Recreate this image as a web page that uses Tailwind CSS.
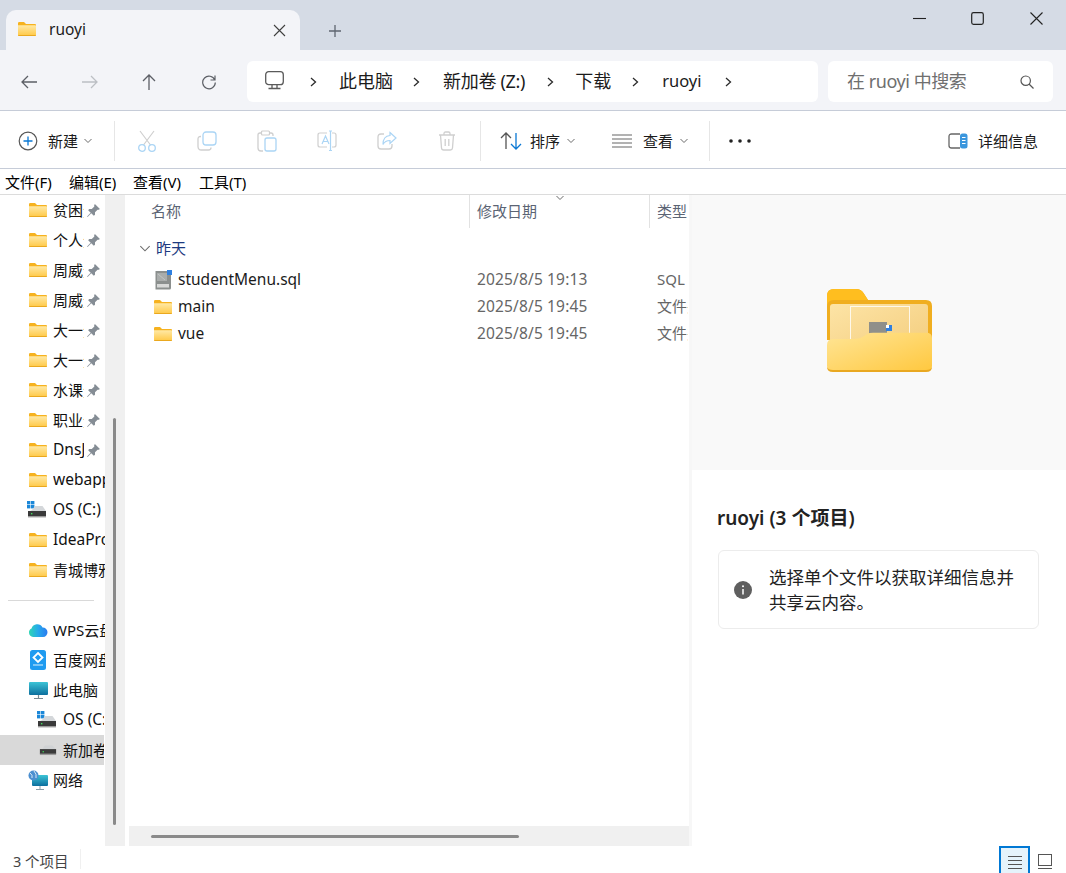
<!DOCTYPE html>
<html lang="zh">
<head>
<meta charset="utf-8">
<script src="https://cdn.jsdelivr.net/npm/@tailwindcss/browser@4"></script>
</head>
<body class="bg-white">
<svg width="0" height="0" class="absolute">
  <defs>
    <linearGradient id="fb" x1="0" y1="0" x2="0" y2="1"><stop offset="0" stop-color="#ffe9a6"/><stop offset="1" stop-color="#ffc845"/></linearGradient>
    <linearGradient id="fp" x1="0" y1="0" x2="1" y2="1"><stop offset="0" stop-color="#fde4a6"/><stop offset="1" stop-color="#f3cc7c"/></linearGradient>
    <linearGradient id="ff" x1="0" y1="0" x2="1" y2="1"><stop offset="0" stop-color="#ffe596"/><stop offset="1" stop-color="#ffc83f"/></linearGradient>
    <linearGradient id="wps" x1="0" y1="0" x2="1" y2="0"><stop offset="0" stop-color="#2fd6b4"/><stop offset=".5" stop-color="#26a9ec"/><stop offset="1" stop-color="#2a7bef"/></linearGradient>
    <linearGradient id="mon" x1="0" y1="0" x2="0" y2="1"><stop offset="0" stop-color="#3cc4d6"/><stop offset="1" stop-color="#0d6f9e"/></linearGradient>
    <symbol id="folder" viewBox="0 0 18 14">
      <path d="M0 1.2Q0 0 1.2 0H6L8 2H17Q18 2 18 3V8H0Z" fill="#f6b21f"/>
      <path d="M0 3.2H17.2Q18 3.2 18 4V13Q18 14 17 14H1Q0 14 0 13Z" fill="url(#fb)"/>
      <path d="M0 13H18Q18 14 17 14H1Q0 14 0 13Z" fill="#eaa81f"/>
    </symbol>
    <symbol id="pin" viewBox="0 0 14 14">
      <path d="M8.3 1L13 5.7 11.9 6.4 10.8 6.2 8.4 8.6 8.4 11 7.3 12 4.9 9.6 1.5 13 1 12.5 4.4 9.1 2 6.7 3 5.6 5.4 5.6 7.8 3.2 7.6 2.1Z" fill="#858d95"/>
    </symbol>
    <symbol id="drive" viewBox="0 0 20 18">
      <rect x="0" y="0" width="3.4" height="3.4" fill="#1b87d8"/><rect x="4" y="0" width="3.4" height="3.4" fill="#1b87d8"/>
      <rect x="0" y="4" width="3.4" height="3.4" fill="#1b87d8"/><rect x="4" y="4" width="3.4" height="3.4" fill="#1b87d8"/>
      <path d="M5 9L8 5H15.5L19 10V11H1Z" fill="#d4d7da"/>
      <rect x="1" y="10" width="18" height="6" fill="#3a3a3a"/><rect x="1" y="15" width="18" height="1.4" fill="#9a9a9a"/>
      <rect x="4" y="12" width="1.4" height="1.4" fill="#3fdc5a"/>
    </symbol>
    <symbol id="drive2" viewBox="0 0 20 12">
      <path d="M4 4.5L6.500 1H15L18.500 5V6H1.500Z" fill="#d0d2d4"/>
      <rect x="1" y="5" width="18" height="5.500" fill="#3a3a3a"/><rect x="1" y="10" width="18" height="1.600" fill="#999"/>
      <rect x="4" y="7.200" width="1.400" height="1.400" fill="#3fdc5a"/>
    </symbol>
    <symbol id="chev" viewBox="0 0 10 12"><path d="M3 2L7.500 6 3 10" fill="none" stroke="#2b2b2b" stroke-width="1.300"/></symbol>
    <symbol id="down" viewBox="0 0 10 6"><path d="M1.500 1L5 4.500 8.500 1" fill="none" stroke="#6b6b6b" stroke-width="1"/></symbol>
  </defs>
</svg>

<div class="w-[1066px] h-[873px] overflow-hidden flex flex-col bg-white text-[#1b1b1b] font-['Noto_Sans','Noto_Sans_CJK_SC',sans-serif]">

  <!-- title bar -->
  <div class="h-[50px] shrink-0 bg-[#d5dbe5] flex items-end pl-[6px] relative">
    <div class="w-[294px] h-[40px] bg-[#f3f4f8] rounded-t-[10px] flex items-center pl-[12px] pr-[14px]">
      <svg width="18" height="14" class="mb-[2px]"><use href="#folder"/></svg>
      <span class="ml-[13px] text-[15.500px] leading-none flex-1">ruoyi</span>
      <svg width="13" height="13" viewBox="0 0 13 13"><path d="M1 1L12 12M12 1L1 12" stroke="#3f3f3f" stroke-width="1.100"/></svg>
    </div>
    <svg width="14" height="14" viewBox="0 0 14 14" class="ml-[28px] mb-[12px]"><path d="M7 1V13M1 7H13" stroke="#5f6670" stroke-width="1.300"/></svg>
    <div class="flex-1"></div>
    <div class="self-start flex h-[37px] items-center">
      <div class="w-[58px] flex justify-center"><svg width="13" height="13" viewBox="0 0 13 13"><path d="M0 6.500H13" stroke="#222" stroke-width="1.100"/></svg></div>
      <div class="w-[58px] flex justify-center"><svg width="13" height="13" viewBox="0 0 13 13"><rect x=".7" y=".7" width="11.600" height="11.600" rx="1.800" fill="none" stroke="#222" stroke-width="1.200"/></svg></div>
      <div class="w-[60px] flex justify-center"><svg width="13" height="13" viewBox="0 0 13 13"><path d="M.5 .5L12.500 12.500M12.500 .5L.5 12.500" stroke="#222" stroke-width="1.100"/></svg></div>
    </div>
  </div>

  <!-- address row -->
  <div class="h-[61px] shrink-0 bg-[#f3f4f8] flex items-center border-b border-[#c6ccd8] pt-[3px]">
    <div class="w-[60px] flex justify-center pr-[2px]"><svg width="16" height="14" viewBox="0 0 16 14"><path d="M7 1L1 7L7 13M1 7H16" fill="none" stroke="#5c5f66" stroke-width="1.300"/></svg></div>
    <div class="w-[60px] flex justify-center"><svg width="16" height="14" viewBox="0 0 16 14"><path d="M9 1L15 7L9 13M0 7H15" fill="none" stroke="#bcbfc4" stroke-width="1.300"/></svg></div>
    <div class="w-[60px] flex justify-center pr-[2px]"><svg width="14" height="16" viewBox="0 0 14 16"><path d="M1 7L7 1L13 7M7 1V16" fill="none" stroke="#5c5f66" stroke-width="1.300"/></svg></div>
    <div class="w-[60px] flex justify-center pr-[2px]"><svg width="16" height="16" viewBox="0 0 16 16"><path d="M13.800 6A6.300 6.300 0 1 0 14.300 8.500M14 1.500V6H9.500" fill="none" stroke="#5c5f66" stroke-width="1.200"/></svg></div>
    <div class="ml-[7px] w-[571px] h-[41px] bg-white rounded-[6px] flex items-center text-[18px]">
      <svg width="19" height="19" viewBox="0 0 19 19" class="ml-[18px] mb-[3px]"><rect x=".7" y=".7" width="17.600" height="13" rx="3" fill="none" stroke="#5a5a5a" stroke-width="1.300"/><path d="M7 14V17M12 14V17M3.500 17.500H15.500" stroke="#5a5a5a" stroke-width="1.300"/></svg>
      <svg width="10" height="12" class="ml-[24px]"><use href="#chev"/></svg>
      <span class="ml-[21px]">此电脑</span>
      <svg width="10" height="12" class="ml-[18px]"><use href="#chev"/></svg>
      <span class="ml-[22px] tracking-[-0.3px]">新加卷 (Z:)</span>
      <svg width="10" height="12" class="ml-[20px]"><use href="#chev"/></svg>
      <span class="ml-[20px]">下载</span>
      <svg width="10" height="12" class="ml-[19px]"><use href="#chev"/></svg>
      <span class="ml-[22px] text-[16.500px]">ruoyi</span>
      <svg width="10" height="12" class="ml-[21px]"><use href="#chev"/></svg>
    </div>
    <div class="ml-[10px] w-[225px] h-[41px] bg-white rounded-[6px] flex items-center pl-[19px] text-[18px] text-[#6f6f6f]">
      <span class="flex-1 tracking-[-0.45px]">在 ruoyi 中搜索</span>
      <svg width="14" height="14" viewBox="0 0 14 14" class="mr-[19px]"><circle cx="5.700" cy="5.700" r="4.700" fill="none" stroke="#555" stroke-width="1.200"/><path d="M9 9L13.500 13.500" stroke="#555" stroke-width="1.200"/></svg>
    </div>
  </div>

  <!-- toolbar -->
  <div class="h-[58px] shrink-0 bg-white flex items-center border-b border-[#c6ccd8] text-[15px] pt-[3px]">
    <svg width="20" height="20" viewBox="0 0 20 20" class="ml-[18px]"><circle cx="10" cy="10" r="8.800" fill="none" stroke="#555" stroke-width="1.200"/><path d="M10 5.500V14.500M5.500 10H14.500" stroke="#0a78d4" stroke-width="1.300"/></svg>
    <span class="ml-[10px] leading-none">新建</span>
    <svg width="10" height="6" class="ml-[5px]"><use href="#down"/></svg>
    <div class="ml-[21px] w-px h-[40px] bg-[#e6e6e6]"></div>
    <div class="w-[2px]"></div>
    <!-- disabled actions -->
    <div class="w-[60px] flex justify-center"><svg width="20" height="22" viewBox="0 0 20 22"><path d="M3 1L13.500 15M17 1L6.500 15" stroke="#cfcfcf" stroke-width="1.200"/><circle cx="5" cy="18" r="3.300" fill="none" stroke="#abd5f5" stroke-width="1.300"/><circle cx="15" cy="18" r="3.300" fill="none" stroke="#abd5f5" stroke-width="1.300"/></svg></div>
    <div class="w-[60px] flex justify-center"><svg width="20" height="20" viewBox="0 0 20 20"><path d="M4 5.500H3.500Q1 5.500 1 8V15.500Q1 19 4.500 19H11.500Q14 19 14 16.500" fill="none" stroke="#cfcfcf" stroke-width="1.300"/><rect x="6" y="1" width="13" height="13" rx="3" fill="none" stroke="#abd5f5" stroke-width="1.300"/></svg></div>
    <div class="w-[60px] flex justify-center"><svg width="20" height="22" viewBox="0 0 20 22"><path d="M4 3H3Q1 3 1 5V18Q1 21 4 21H6" fill="none" stroke="#cfcfcf" stroke-width="1.300"/><path d="M12 3H14Q16 3 16 5V6" fill="none" stroke="#cfcfcf" stroke-width="1.300"/><rect x="4.500" y="1" width="8" height="4" rx="1" fill="none" stroke="#cfcfcf" stroke-width="1.200"/><rect x="8" y="8" width="11" height="13" rx="2" fill="none" stroke="#abd5f5" stroke-width="1.300"/></svg></div>
    <div class="w-[60px] flex justify-center"><svg width="20" height="22" viewBox="0 0 20 22"><path d="M10 3H3Q1 3 1 5V15Q1 17 3 17H10" fill="none" stroke="#cfcfcf" stroke-width="1.200"/><path d="M15 3H17Q19 3 19 5V15Q19 17 17 17H15" fill="none" stroke="#cfcfcf" stroke-width="1.200"/><path d="M5 14L8.500 6 12 14M6.200 11.500H10.800" fill="none" stroke="#abd5f5" stroke-width="1.200"/><path d="M12 1H15M13.500 1V20M12 20.500H15" fill="none" stroke="#abd5f5" stroke-width="1.200"/></svg></div>
    <div class="w-[60px] flex justify-center"><svg width="20" height="20" viewBox="0 0 20 20"><path d="M7 3H4Q1 3 1 6V15Q1 18 4 18H12Q15 18 15 15V13" fill="none" stroke="#cfcfcf" stroke-width="1.300"/><path d="M13 1.500L19 7 13 12.500V9.500Q8 9.500 6 13.500 6 5 13 4.500Z" fill="none" stroke="#abd5f5" stroke-width="1.200"/></svg></div>
    <div class="w-[60px] flex justify-center"><svg width="18" height="20" viewBox="0 0 18 20"><path d="M1 4H17M6 4V2.500Q6 1 7.500 1H10.500Q12 1 12 2.500V4M2.500 4L3.500 17Q3.700 19 5.700 19H12.300Q14.300 19 14.500 17L15.500 4M7.200 8V15M10.800 8V15" fill="none" stroke="#cfcfcf" stroke-width="1.300"/></svg></div>
    <div class="ml-[3px] w-px h-[40px] bg-[#e6e6e6]"></div>
    <svg width="22" height="18" viewBox="0 0 22 18" class="ml-[19px]"><path d="M1 6L6 1 11 6M6 1V17" fill="none" stroke="#555" stroke-width="1.300"/><path d="M11 12L16 17 21 12M16 1V17" fill="none" stroke="#0a78d4" stroke-width="1.300"/></svg>
    <span class="ml-[8px] leading-none">排序</span>
    <svg width="10" height="6" class="ml-[6px]"><use href="#down"/></svg>
    <svg width="20" height="14" viewBox="0 0 20 14" class="ml-[36px]"><path d="M0 1H20M0 5H20M0 9H20M0 13H20" stroke="#666" stroke-width="1.100"/></svg>
    <span class="ml-[11px] leading-none">查看</span>
    <svg width="10" height="6" class="ml-[6px]"><use href="#down"/></svg>
    <div class="ml-[20px] w-px h-[40px] bg-[#e6e6e6]"></div>
    <svg width="22" height="4" viewBox="0 0 22 4" class="ml-[19px]"><circle cx="2" cy="2" r="1.800" fill="#222"/><circle cx="11" cy="2" r="1.800" fill="#222"/><circle cx="20" cy="2" r="1.800" fill="#222"/></svg>
    <div class="flex-1"></div>
    <svg width="20" height="16" viewBox="0 0 20 16"><path d="M12 1H3.500Q1 1 1 3.500V12.500Q1 15 3.500 15H12" fill="none" stroke="#666" stroke-width="1.300"/><rect x="12" y=".5" width="7.500" height="15" rx="2.500" fill="#3a96dd"/><path d="M14 4.500H17.500M14 7.500H17.500M14 10.500H17.500" stroke="#fff" stroke-width="1.200"/></svg>
    <span class="ml-[10px] mr-[28px] leading-none">详细信息</span>
  </div>

  <!-- menu bar -->
  <div class="h-[26px] shrink-0 bg-white flex items-center border-b border-[#dcdcdc] text-[15px] text-black pt-[1px]">
    <span class="ml-[5px] w-[64px]">文件(F)</span>
    <span class="w-[64px]">编辑(E)</span>
    <span class="w-[66px]">查看(V)</span>
    <span>工具(T)</span>
  </div>

  <!-- body -->
  <div class="flex-1 min-h-0 flex">
    <!-- nav pane -->
    <div class="w-[105px] shrink-0 overflow-hidden text-[15px] leading-none text-[#111] whitespace-nowrap">
      <div class="h-[30px] flex items-center pl-[29px]"><svg width="18" height="14" class="shrink-0"><use href="#folder"/></svg><span class="ml-[6px] w-[31px] overflow-hidden">贫困资料</span><svg width="15" height="15" class="ml-[2px] shrink-0"><use href="#pin"/></svg></div>
      <div class="h-[30px] flex items-center pl-[29px]"><svg width="18" height="14" class="shrink-0"><use href="#folder"/></svg><span class="ml-[6px] w-[31px] overflow-hidden">个人资料</span><svg width="15" height="15" class="ml-[2px] shrink-0"><use href="#pin"/></svg></div>
      <div class="h-[30px] flex items-center pl-[29px]"><svg width="18" height="14" class="shrink-0"><use href="#folder"/></svg><span class="ml-[6px] w-[31px] overflow-hidden">周威资料</span><svg width="15" height="15" class="ml-[2px] shrink-0"><use href="#pin"/></svg></div>
      <div class="h-[30px] flex items-center pl-[29px]"><svg width="18" height="14" class="shrink-0"><use href="#folder"/></svg><span class="ml-[6px] w-[31px] overflow-hidden">周威资料</span><svg width="15" height="15" class="ml-[2px] shrink-0"><use href="#pin"/></svg></div>
      <div class="h-[30px] flex items-center pl-[29px]"><svg width="18" height="14" class="shrink-0"><use href="#folder"/></svg><span class="ml-[6px] w-[31px] overflow-hidden">大一资料</span><svg width="15" height="15" class="ml-[2px] shrink-0"><use href="#pin"/></svg></div>
      <div class="h-[30px] flex items-center pl-[29px]"><svg width="18" height="14" class="shrink-0"><use href="#folder"/></svg><span class="ml-[6px] w-[31px] overflow-hidden">大一资料</span><svg width="15" height="15" class="ml-[2px] shrink-0"><use href="#pin"/></svg></div>
      <div class="h-[30px] flex items-center pl-[29px]"><svg width="18" height="14" class="shrink-0"><use href="#folder"/></svg><span class="ml-[6px] w-[31px] overflow-hidden">水课资料</span><svg width="15" height="15" class="ml-[2px] shrink-0"><use href="#pin"/></svg></div>
      <div class="h-[30px] flex items-center pl-[29px]"><svg width="18" height="14" class="shrink-0"><use href="#folder"/></svg><span class="ml-[6px] w-[31px] overflow-hidden">职业资料</span><svg width="15" height="15" class="ml-[2px] shrink-0"><use href="#pin"/></svg></div>
      <div class="h-[30px] flex items-center pl-[29px]"><svg width="18" height="14" class="shrink-0"><use href="#folder"/></svg><span class="ml-[6px] w-[31px] overflow-hidden text-[15.500px]">DnsJava</span><svg width="15" height="15" class="ml-[2px] shrink-0"><use href="#pin"/></svg></div>
      <div class="h-[30px] flex items-center pl-[29px]"><svg width="18" height="14" class="shrink-0"><use href="#folder"/></svg><span class="ml-[6px] w-[52px] overflow-hidden text-[15.500px]">webapps</span></div>
      <div class="h-[30px] flex items-center pl-[27px]"><svg width="20" height="18" class="shrink-0"><use href="#drive"/></svg><span class="ml-[6px] w-[52px] overflow-hidden text-[15.500px]">OS (C:)</span></div>
      <div class="h-[30px] flex items-center pl-[29px]"><svg width="18" height="14" class="shrink-0"><use href="#folder"/></svg><span class="ml-[6px] w-[52px] overflow-hidden text-[15.500px]">IdeaProjects</span></div>
      <div class="h-[30px] flex items-center pl-[29px]"><svg width="18" height="14" class="shrink-0"><use href="#folder"/></svg><span class="ml-[6px] w-[52px] overflow-hidden">青城博雅教育</span></div>

      <div class="mt-[15px] mb-[14px] ml-[8px] w-[86px] h-px bg-[#d9d9d9]"></div>

      <div class="h-[30px] flex items-center pl-[28px]"><svg width="20" height="14" viewBox="0 0 20 14" class="shrink-0"><path d="M5 14A4.500 4.500 0 0 1 3.500 5.500 6 6 0 0 1 14.500 4.500 4.700 4.700 0 0 1 15 14Z" fill="url(#wps)"/></svg><span class="ml-[5px] w-[52px] overflow-hidden">WPS云盘</span></div>
      <div class="h-[30px] flex items-center pl-[30px]"><svg width="16" height="20" viewBox="0 0 16 20" class="shrink-0"><rect width="16" height="20" rx="2.500" fill="#1f9bf0"/><path d="M8 3L12.500 7.500 8 12 3.500 7.500Z" fill="none" stroke="#fff" stroke-width="1.800"/><path d="M3 15H13" stroke="#bfe3fb" stroke-width="1.200"/></svg><span class="ml-[7px] w-[52px] overflow-hidden">百度网盘</span></div>
      <div class="h-[30px] flex items-center pl-[29px]"><svg width="19" height="17" viewBox="0 0 19 17" class="shrink-0"><rect width="19" height="13" rx="1" fill="url(#mon)"/><path d="M9.500 13V16M5 16.500H14" stroke="#7b8a92" stroke-width="1.200"/></svg><span class="ml-[5px]">此电脑</span></div>
      <div class="h-[30px] flex items-center pl-[37px]"><svg width="20" height="18" class="shrink-0"><use href="#drive"/></svg><span class="ml-[6px] w-[41px] overflow-hidden text-[15.500px]">OS (C:)</span></div>
      <div class="h-[30px] flex items-center pl-[39px] bg-[#d9d9d9] w-[104px]"><svg width="18" height="12" class="shrink-0"><use href="#drive2"/></svg><span class="ml-[6px] w-[41px] overflow-hidden">新加卷 (Z:)</span></div>
      <div class="h-[30px] flex items-center pl-[28px]"><svg width="21" height="20" viewBox="0 0 21 20" class="shrink-0"><rect x="4" y="5" width="16" height="11" rx="1" fill="url(#mon)"/><path d="M12 16V19M8 19.500H16" stroke="#8ba0ab" stroke-width="1"/><circle cx="5.500" cy="5.500" r="5" fill="#4b8fd0"/><path d="M2 3Q5 5 4 8M6 1Q9 4 8 8" fill="none" stroke="#d8e8f4" stroke-width="1"/></svg><span class="ml-[4px]">网络</span></div>
    </div>

    <!-- nav scrollbar -->
    <div class="w-[20px] shrink-0 bg-[#f0f0f0] flex justify-center pr-[1px]">
      <div class="mt-[223px] mb-[21px] w-[3px] bg-[#8a8a8a] rounded-full"></div>
    </div>

    <!-- file list -->
    <div class="w-[564px] shrink-0 pl-[4px] flex flex-col overflow-hidden">
      <div class="flex-1 min-h-0">
        <div class="h-[33px] flex text-[15px] text-[#5b6474] whitespace-nowrap">
          <div class="w-[340px] pl-[22px] pt-[5px]">名称</div>
          <div class="w-[180px] border-l border-[#e2e2e2] pl-[7px] pt-[5px] relative">修改日期
            <svg width="10" height="6" class="absolute left-[85px] top-0"><use href="#down"/></svg>
          </div>
          <div class="flex-1 border-l border-[#e2e2e2] pl-[7px] pt-[5px] overflow-hidden">类型</div>
        </div>
        <div class="h-[38px] pt-[3px] flex items-center pl-[10px] text-[15px] text-[#1d3a80]">
          <svg width="12" height="7" viewBox="0 0 10 6"><path d="M1 1L5 5 9 1" fill="none" stroke="#6b6b6b" stroke-width=".9"/></svg>
          <span class="ml-[5px]">昨天</span>
        </div>
        <div class="h-[27px] flex items-center text-[15.500px] whitespace-nowrap">
          <div class="w-[340px] pl-[25px] flex items-center">
            <svg width="18" height="20" viewBox="0 0 18 20" class="shrink-0"><path d="M1.500 1H13L17 5V18Q17 19.500 15.500 19.500H1.500Z" fill="#8b8f8e"/><rect x="3" y="3" width="10" height="8" fill="#a9acab"/><path d="M4 4L11 10" stroke="#c9cbca" stroke-width=".8"/><rect x="3" y="14" width="12" height="3.500" fill="#d8d9d8"/><rect x="13" y="0" width="5" height="5" fill="#2f80e0"/></svg>
            <span class="ml-[6px]">studentMenu.sql</span>
          </div>
          <div class="w-[180px] pl-[8px] tracking-[0.15px] text-[#666]">2025/8/5 19:13</div>
          <div class="w-[31px] ml-[8px] text-[15px] text-[#666] overflow-hidden">SQL 文件</div>
        </div>
        <div class="h-[27px] flex items-center text-[15.500px] whitespace-nowrap">
          <div class="w-[340px] pl-[25px] flex items-center">
            <svg width="18" height="14" class="shrink-0"><use href="#folder"/></svg>
            <span class="ml-[6px]">main</span>
          </div>
          <div class="w-[180px] pl-[8px] tracking-[0.15px] text-[#666]">2025/8/5 19:45</div>
          <div class="w-[31px] ml-[8px] text-[15px] text-[#666] overflow-hidden">文件夹</div>
        </div>
        <div class="h-[27px] flex items-center text-[15.500px] whitespace-nowrap">
          <div class="w-[340px] pl-[25px] flex items-center">
            <svg width="18" height="14" class="shrink-0"><use href="#folder"/></svg>
            <span class="ml-[6px]">vue</span>
          </div>
          <div class="w-[180px] pl-[8px] tracking-[0.15px] text-[#666]">2025/8/5 19:45</div>
          <div class="w-[31px] ml-[8px] text-[15px] text-[#666] overflow-hidden">文件夹</div>
        </div>
      </div>
      <div class="h-[20px] shrink-0 bg-[#f0f0f0] pl-[22px] flex items-center">
        <div class="w-[368px] h-[3px] bg-[#8a8a8a] rounded-full"></div>
      </div>
    </div>

    <!-- details pane -->
    <div class="flex-1 flex flex-col border-l-[3px] border-[#f7f7f7]">
      <div class="h-[275px] shrink-0 bg-[#f9f9f9] flex justify-center pt-[94px]">
        <svg width="105" height="83" viewBox="27 19 105 83">
          <path d="M27 26Q27 19 34 19H56Q61 19 63.500 23L68 30H126Q132 30 132 36V70H27Z" fill="#f0ae20"/>
          <path d="M27 26Q27 19 34 19H56Q61 19 63.500 23L68 30H34Q27 30 27 37Z" fill="#ffbe1f"/>
          <rect x="30" y="34" width="98" height="50" rx="3" fill="url(#fp)"/>
          <rect x="50.500" y="36.500" width="59" height="40" fill="none" stroke="#fff" stroke-opacity=".8"/>
          <rect x="69" y="52" width="18" height="14" fill="#8f8f8a"/>
          <rect x="86" y="55" width="6" height="6" fill="#2f7fe0"/>
          <rect x="86" y="55" width="3" height="3" fill="#fff"/>
          <path d="M27 75Q27 69 33 69H55Q60 69 64 66L67 64Q69 62.700 73 62.700H126Q132 62.700 132 68V96Q132 101 126 101H33Q27 101 27 96Z" fill="url(#ff)"/>
          <path d="M27 97Q28 100 33 100H126Q131 100 132 97V97Q132 102 126 102H33Q27 102 27 97Z" fill="#e9a821"/>
        </svg>
      </div>
      <div class="pl-[25px] pr-[27px]">
        <div class="mt-[35px] text-[19px] font-semibold leading-[26px] text-[#222]">ruoyi (3 个项目)</div>
        <div class="mt-[19px] ml-[1px] h-[79px] border border-[#ececec] rounded-[6px] flex items-center pl-[15px]">
          <svg width="18" height="18" viewBox="0 0 18 18" class="shrink-0"><circle cx="9" cy="9" r="9" fill="#5f5f5f"/><path d="M9 8V13.500" stroke="#fff" stroke-width="1.500"/><circle cx="9" cy="5.200" r="1" fill="#fff"/></svg>
          <p class="ml-[17px] text-[17.500px] leading-[25px] text-[#222]">选择单个文件以获取详细信息并<br>共享云内容。</p>
        </div>
      </div>
    </div>
  </div>

  <!-- status bar -->
  <div class="h-[27px] shrink-0 bg-white flex items-start relative text-[14.500px] text-[#444]">
    <span class="ml-[13px] mt-[4px] leading-[22px]">3 个项目</span>
    <div class="ml-[11px] w-px h-[20px] mt-[3px] bg-[#f0f0f0]"></div>
    <div class="flex-1"></div>
    <div class="w-[31px] h-[30px] bg-[#e5f3fb] border-2 border-[#0078d4] flex flex-col gap-[3px] items-center pt-[8px]">
      <div class="w-[14px] h-px bg-[#555]"></div><div class="w-[14px] h-px bg-[#555]"></div><div class="w-[14px] h-px bg-[#555]"></div><div class="w-[14px] h-px bg-[#555]"></div>
    </div>
    <svg width="14" height="16" viewBox="0 0 14 16" class="ml-[8px] mr-[14px] mt-[8px]"><rect x=".5" y=".5" width="13" height="11" fill="none" stroke="#555"/><path d="M0 14.500H14" stroke="#555"/></svg>
  </div>
</div>
</body>
</html>
